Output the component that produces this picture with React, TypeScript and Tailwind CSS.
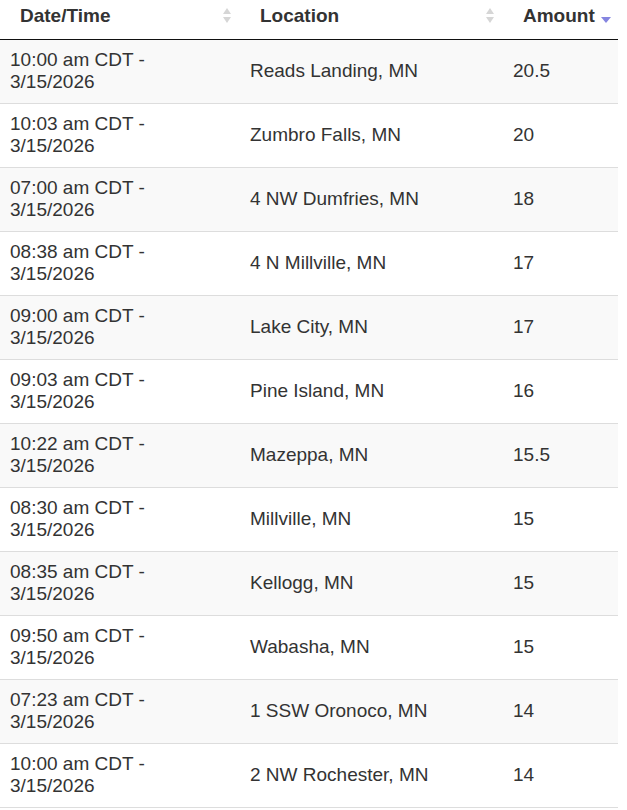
import type { ReactNode } from 'react'

type Report = { time: string; location: string; amount: string }

const reports: Report[] = [
  { time: '10:00 am CDT', location: 'Reads Landing, MN', amount: '20.5' },
  { time: '10:03 am CDT', location: 'Zumbro Falls, MN', amount: '20' },
  { time: '07:00 am CDT', location: '4 NW Dumfries, MN', amount: '18' },
  { time: '08:38 am CDT', location: '4 N Millville, MN', amount: '17' },
  { time: '09:00 am CDT', location: 'Lake City, MN', amount: '17' },
  { time: '09:03 am CDT', location: 'Pine Island, MN', amount: '16' },
  { time: '10:22 am CDT', location: 'Mazeppa, MN', amount: '15.5' },
  { time: '08:30 am CDT', location: 'Millville, MN', amount: '15' },
  { time: '08:35 am CDT', location: 'Kellogg, MN', amount: '15' },
  { time: '09:50 am CDT', location: 'Wabasha, MN', amount: '15' },
  { time: '07:23 am CDT', location: '1 SSW Oronoco, MN', amount: '14' },
  { time: '10:00 am CDT', location: '2 NW Rochester, MN', amount: '14' },
]

function SortBoth() {
  return (
    <svg width="10" height="16" viewBox="0 0 10 16" className="absolute right-[8px] top-[8px]">
      <path d="M5 0 L9 6 L1 6 Z" fill="#d6d6d6" />
      <path d="M1 9 L9 9 L5 15 Z" fill="#d6d6d6" />
    </svg>
  )
}

function SortDesc() {
  return (
    <svg width="10" height="6" viewBox="0 0 10 6" className="absolute right-[7px] top-[17px]">
      <path d="M0 0 L10 0 L5 6 Z" fill="#8585e0" />
    </svg>
  )
}

function Th({ children, width, sort }: { children: ReactNode; width: number; sort: ReactNode }) {
  return (
    <th
      style={{ width }}
      className="relative h-[40px] border-b border-[#111] pl-[20px] pr-[18px] pt-[5px] text-left align-top font-bold"
    >
      {children}
      {sort}
    </th>
  )
}

export default function App() {
  return (
    <div className="min-h-[810px] bg-white">
      <table
        className="w-[618px] table-fixed border-separate border-spacing-0 text-[19px] leading-[22px] text-[#333]"
        style={{ fontFamily: '"Liberation Sans", Arial, sans-serif' }}
      >
        <thead>
          <tr>
            <Th width={240} sort={<SortBoth />}>Date/Time</Th>
            <Th width={263} sort={<SortBoth />}>Location</Th>
            <Th width={115} sort={<SortDesc />}>Amount</Th>
          </tr>
        </thead>
        <tbody>
          {reports.map((r, i) => (
            <tr key={i} className={i % 2 === 0 ? 'bg-[#f9f9f9]' : 'bg-white'}>
              <td className="border-b border-[#ddd] pl-[10px] pr-[10px] pt-[9px] pb-[10px] align-middle">
                {r.time} -<br />3/15/2026
              </td>
              <td className="border-b border-[#ddd] px-[10px] pb-[1px] align-middle">{r.location}</td>
              <td className="border-b border-[#ddd] px-[10px] pb-[1px] align-middle">{r.amount}</td>
            </tr>
          ))}
        </tbody>
      </table>
    </div>
  )
}
